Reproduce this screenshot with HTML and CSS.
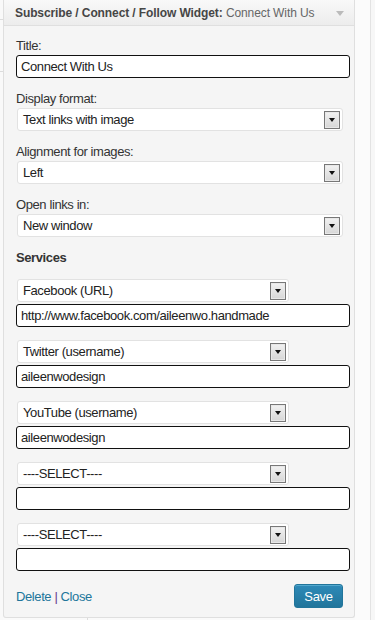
FILE: index.html
```html
<!DOCTYPE html>
<html>
<head>
<meta charset="utf-8">
<link rel="stylesheet" href="styles.css">
</head>
<body>
<div class="stage">
  <div class="left-strip"></div>
  <div class="col">
    <div class="widget">
      <div class="widget-top">
        <h4 class="widget-title">Subscribe / Connect / Follow Widget: <span class="in-title">Connect With Us</span></h4>
        <span class="toggle"></span>
      </div>
      <div class="widget-inside">
        <div class="field">
          <div class="label">Title:</div>
          <div class="input">Connect With Us</div>
        </div>
        <div class="field">
          <div class="label">Display format:</div>
          <div class="select wide"><span class="sel-text">Text links with image</span><span class="btn"></span></div>
        </div>
        <div class="field">
          <div class="label">Alignment for images:</div>
          <div class="select wide"><span class="sel-text">Left</span><span class="btn"></span></div>
        </div>
        <div class="field">
          <div class="label">Open links in:</div>
          <div class="select wide"><span class="sel-text">New window</span><span class="btn"></span></div>
        </div>
        <div class="services-title">Services</div>
        <div class="service">
          <div class="select narrow"><span class="sel-text">Facebook (URL)</span><span class="btn"></span></div>
          <div class="input">http://www.facebook.com/aileenwo.handmade</div>
        </div>
        <div class="service">
          <div class="select narrow"><span class="sel-text">Twitter (username)</span><span class="btn"></span></div>
          <div class="input">aileenwodesign</div>
        </div>
        <div class="service">
          <div class="select narrow"><span class="sel-text">YouTube (username)</span><span class="btn"></span></div>
          <div class="input">aileenwodesign</div>
        </div>
        <div class="service">
          <div class="select narrow"><span class="sel-text">----SELECT----</span><span class="btn"></span></div>
          <div class="input"></div>
        </div>
        <div class="service">
          <div class="select narrow"><span class="sel-text">----SELECT----</span><span class="btn"></span></div>
          <div class="input"></div>
        </div>
        <div class="footer">
          <div class="links"><a href="#" class="lnk">Delete</a> <span class="sep">|</span> <a href="#" class="lnk">Close</a></div>
          <button class="save">Save</button>
        </div>
      </div>
    </div>
    <div class="below"><div class="below-line"></div></div>
  </div>
  <div class="right-gap"></div>
  <div class="right-line"></div>
  <div class="right-rest"></div>
</div>
</body>
</html>
```

FILE: styles.css
```css
html, body {
  margin: 0;
  padding: 0;
}
body {
  background: #fafafa;
  font-family: "Liberation Sans", Arial, sans-serif;
  color: #333;
  width: 375px;
  height: 620px;
  overflow: hidden;
}
.stage {
  display: flex;
  align-items: stretch;
  height: 620px;
}
.left-strip {
  width: 3px;
  flex: none;
  background:
    linear-gradient(#dcdcdc, #dcdcdc) 0 19px / 3px 1px no-repeat,
    linear-gradient(#dcdcdc, #dcdcdc) 0 71px / 3px 1px no-repeat,
    #f9f9f9;
}
.col {
  width: 352px;
  flex: none;
  display: flex;
  flex-direction: column;
}
.widget {
  border: 1px solid #dfdfdf;
  border-top: none;
  border-radius: 0 0 3px 3px;
  background: #f5f5f5;
  box-shadow: 0 1px 0 #fff inset;
}
.widget-top {
  height: 25px;
  border-bottom: 1px solid #dfdfdf;
  background: linear-gradient(#f9f9f9, #ececec);
  display: flex;
  align-items: center;
  justify-content: space-between;
  padding: 0 10px 0 11px;
}
.widget-title {
  margin: 0;
  font-size: 12px;
  font-weight: bold;
  color: #464646;
  white-space: nowrap;
  line-height: 16px;
  letter-spacing: -0.1px;
}
.in-title {
  font-weight: normal;
  color: #666;
}
.toggle {
  width: 0;
  height: 0;
  border-left: 4px solid transparent;
  border-right: 4px solid transparent;
  border-top: 5px solid #bbb;
  margin-top: 2px;
}
.widget-inside {
  padding: 12px 3px 9px 12px;
  letter-spacing: -0.4px;
}
.field {
  margin-bottom: 13px;
}
.label {
  font-size: 13px;
  line-height: 16px;
  margin-bottom: 1px;
  color: #333;
}
.input {
  box-sizing: border-box;
  width: 334px;
  height: 23px;
  border: 1px solid #111;
  border-radius: 3px;
  background: #fff;
  font-size: 13px;
  line-height: 21px;
  padding: 0 4px;
  color: #222;
  white-space: nowrap;
  overflow: hidden;
}
.select {
  box-sizing: border-box;
  height: 23px;
  margin-left: 1px;
  border: 1px solid #e2e2e2;
  border-radius: 3px;
  background: #fff;
  display: flex;
  align-items: center;
  justify-content: space-between;
  padding: 0 2px 0 5px;
}
.select.wide { width: 326px; }
.select.narrow { width: 272px; }
.sel-text {
  font-size: 13px;
  color: #222;
  white-space: nowrap;
}
.btn {
  box-sizing: border-box;
  width: 16px;
  height: 18px;
  border: 1px solid #777;
  background: linear-gradient(#f2f2f2, #d6d6d6);
  display: flex;
  align-items: center;
  justify-content: center;
  box-shadow: inset 0 0 0 1px #e8e8e8;
}
.btn::after {
  content: "";
  width: 0;
  height: 0;
  border-left: 3.5px solid transparent;
  border-right: 3.5px solid transparent;
  border-top: 4px solid #111;
  margin-top: 1px;
}
.services-title {
  font-size: 13px;
  font-weight: bold;
  line-height: 16px;
  color: #333;
  margin-bottom: 13px;
}
.service {
  display: flex;
  flex-direction: column;
  gap: 2px;
  margin-bottom: 13px;
}
.service:last-of-type {
  margin-bottom: 0;
}
.footer {
  margin-top: 10px;
  display: flex;
  align-items: center;
  justify-content: space-between;
  padding-right: 8px;
}
.links {
  font-size: 13px;
  line-height: 16px;
  padding-top: 2px;
}
.lnk {
  color: #21759b;
  text-decoration: none;
}
.sep {
  color: #6a3a8c;
}
.save {
  box-sizing: border-box;
  width: 49px;
  height: 24px;
  border: 1px solid #21759b;
  border-radius: 3px;
  background: linear-gradient(#2e8ab8, #21759b);
  color: #fff;
  font-family: "Liberation Sans", Arial, sans-serif;
  font-size: 13px;
  letter-spacing: -0.3px;
  padding: 0;
  box-shadow: inset 0 1px 0 rgba(120, 200, 230, 0.5);
}
.below {
  flex: 1;
}
.below-line {
  margin-left: 84px;
  width: 1px;
  height: 100%;
  background: #dcdcdc;
}
.right-gap {
  width: 15px;
  flex: none;
  background: #fbfbfb;
}
.right-line {
  width: 1px;
  flex: none;
  background: #e3e3e3;
}
.right-rest {
  flex: 1;
  background: #f7f7f7;
}
```
